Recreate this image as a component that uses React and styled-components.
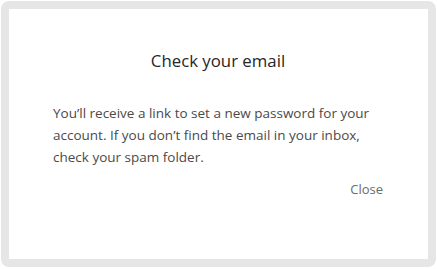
import React from "react";
import styled, { createGlobalStyle } from "styled-components";

const GlobalStyle = createGlobalStyle`
  html, body {
    margin: 0;
    padding: 0;
    background: #ffffff;
  }
  body {
    font-family: "Open Sans", "Noto Sans", sans-serif;
  }
`;

const Frame = styled.div`
  box-sizing: border-box;
  width: 435px;
  height: 266px;
  margin: 1px;
  border: 8px solid #e6e6e6;
  border-radius: 8px;
  background: #ffffff;
  display: flex;
  flex-direction: column;
  padding: 40px 45px 0 44px;
`;

const Title = styled.h2`
  margin: 0;
  text-align: center;
  font-size: 16.8px;
  font-weight: 400;
  line-height: 24px;
  color: #262626;
`;

const Message = styled.p`
  margin: 29px 0 0;
  font-size: 13.5px;
  line-height: 22px;
  color: #4a4a4a;
`;

const Actions = styled.div`
  display: flex;
  justify-content: flex-end;
  margin-top: 10px;
`;

const LinkButton = styled.button`
  border: none;
  background: none;
  padding: 0;
  font-family: inherit;
  font-size: 13px;
  line-height: 22px;
  color: #6b6b6b;
  cursor: pointer;
`;

export default () => {
  return (
    <>
      <GlobalStyle />
      <Frame>
        <Title>Check your email</Title>
        <Message>
          You’ll receive a link to set a new password for your account. If you
          don’t find the email in your inbox, check your spam folder.
        </Message>
        <Actions>
          <LinkButton>Close</LinkButton>
        </Actions>
      </Frame>
    </>
  );
};
